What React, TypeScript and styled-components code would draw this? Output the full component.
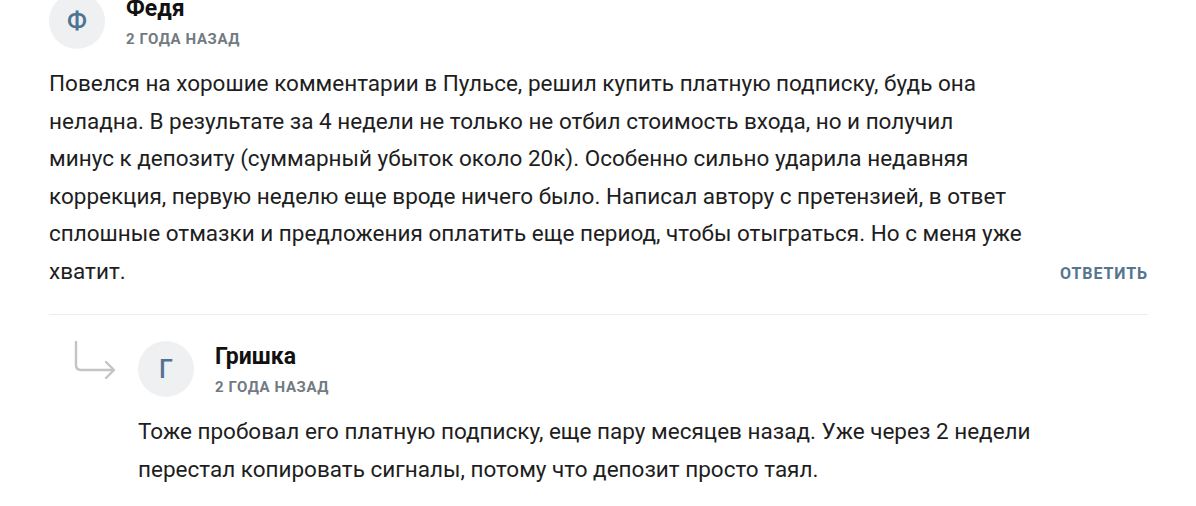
import React from 'react';
import styled, { createGlobalStyle } from 'styled-components';

const GlobalStyle = createGlobalStyle`
  html, body {
    margin: 0;
    padding: 0;
    background: #ffffff;
    font-family: Roboto, "Noto Sans", "Liberation Sans", sans-serif;
    color: #222222;
  }
`;

const Thread = styled.div`
  margin-top: -7px;
  padding: 0 48px 0 49px;
  max-width: 1099px;
`;

const Comment = styled.div`
  display: flex;
  flex-direction: column;
  flex: 1;
`;

const Header = styled.div`
  display: flex;
  align-items: flex-start;
  gap: 21px;
`;

const Avatar = styled.div`
  width: 56px;
  height: 56px;
  flex-shrink: 0;
  border-radius: 50%;
  background: #eef0f2;
  color: #4f7491;
  display: flex;
  align-items: center;
  justify-content: center;
  font-size: 25px;
  font-weight: 500;
`;

const Meta = styled.div`
  display: flex;
  flex-direction: column;
  padding-top: 2px;
`;

const Name = styled.div`
  font-size: 23px;
  line-height: 28px;
  font-weight: 700;
  color: #111111;
`;

const Date = styled.div`
  margin-top: 6px;
  font-size: 15px;
  line-height: 20px;
  font-weight: 700;
  letter-spacing: 0.6px;
  text-transform: uppercase;
  color: #727a82;
`;

const Body = styled.div`
  display: flex;
  align-items: last baseline;
  justify-content: space-between;
  margin-top: 16px;
`;

const Text = styled.p<{ $width: number }>`
  margin: 0;
  max-width: ${({ $width }) => $width}px;
  font-size: 22.5px;
  line-height: 37.5px;
  color: #1e1e1e;
`;

const ReplyButton = styled.button`
  border: none;
  background: none;
  padding: 0;
  font-family: inherit;
  font-size: 16px;
  font-weight: 700;
  letter-spacing: 0.9px;
  text-transform: uppercase;
  color: #557590;
  cursor: pointer;
`;

const Divider = styled.hr`
  margin: 24px 0 26px;
  border: none;
  border-top: 1px solid #ececec;
`;

const ReplyRow = styled.div`
  display: flex;
  align-items: flex-start;
`;

const ArrowColumn = styled.div`
  width: 89px;
  flex-shrink: 0;
  padding-left: 23px;
  box-sizing: border-box;
`;

const ReplyArrow = () => (
  <svg width="44" height="40" viewBox="0 0 44 40" fill="none">
    <path
      d="M4 0 V24 Q4 29 9 29 H41"
      stroke="#c4c4c4"
      strokeWidth="2.4"
      strokeLinecap="round"
    />
    <path
      d="M34 21 L42 29 L34 37"
      stroke="#c4c4c4"
      strokeWidth="2.4"
      strokeLinecap="round"
      strokeLinejoin="round"
    />
  </svg>
);

export default function App() {
  return (
    <>
      <GlobalStyle />
      <Thread>
        <Comment>
          <Header>
            <Avatar>Ф</Avatar>
            <Meta>
              <Name>Федя</Name>
              <Date>2 года назад</Date>
            </Meta>
          </Header>
          <Body>
            <Text $width={1000}>
              Повелся на хорошие комментарии в Пульсе, решил купить платную подписку, будь она
              неладна. В результате за 4 недели не только не отбил стоимость входа, но и получил
              <br />
              минус к депозиту (суммарный убыток около 20к). Особенно сильно ударила недавняя
              коррекция, первую неделю еще вроде ничего было. Написал автору с претензией, в ответ
              сплошные отмазки и предложения оплатить еще период, чтобы отыграться. Но с меня уже
              хватит.
            </Text>
            <ReplyButton>Ответить</ReplyButton>
          </Body>
        </Comment>
        <Divider />
        <ReplyRow>
          <ArrowColumn>
            <ReplyArrow />
          </ArrowColumn>
          <Comment>
            <Header>
              <Avatar>Г</Avatar>
              <Meta>
                <Name>Гришка</Name>
                <Date>2 года назад</Date>
              </Meta>
            </Header>
            <Body>
              <Text $width={920}>
                Тоже пробовал его платную подписку, еще пару месяцев назад. Уже через 2 недели
                перестал копировать сигналы, потому что депозит просто таял.
              </Text>
            </Body>
          </Comment>
        </ReplyRow>
      </Thread>
    </>
  );
}
